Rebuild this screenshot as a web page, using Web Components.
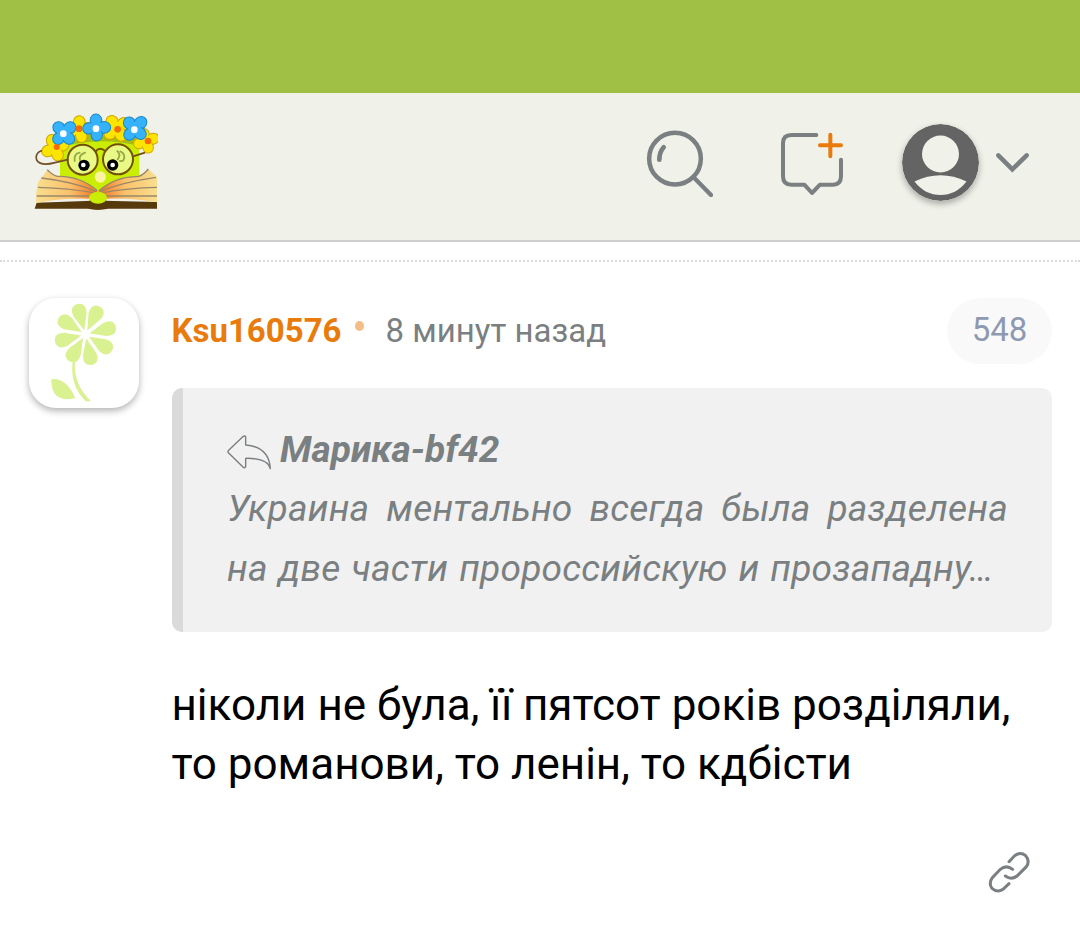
<!DOCTYPE html>
<html lang="ru">
<head>
<meta charset="UTF-8">
<meta name="viewport" content="width=device-width, initial-scale=1">
<title>Форум</title>
<style>
  body {
    margin: 0;
    background: #fff;
    color: #000;
    font-family: Roboto, "Noto Sans", sans-serif;
  }
</style>
</head>
<body>
<site-header></site-header>
<comment-item author="Ksu160576" time="8 минут назад" number="548">
  <quote-block slot="quote" author="Марика-bf42">
    <div>Украина ментально всегда была разделена</div>
    <div>на две части пророссийскую и прозападну…</div>
  </quote-block>
  ніколи не була, її пятсот років розділяли,<br>то романови, то ленін, то кдбісти
</comment-item>

<script>
class SiteLogo extends HTMLElement {
  constructor() {
    super();
    this.attachShadow({ mode: 'open' });
  }

  connectedCallback() {
    this.shadowRoot.innerHTML = `
      <style>
      :host {
        display: block;
        width: 124px;
        height: 98px;
      }

      svg {
        display: block;
      }
      </style>

      <svg width="124" height="98" viewBox="42 37 372 294">
        <defs>
          <linearGradient id="pageLeft" x1="0" x2="1">
            <stop offset="0" stop-color="#f8df8e"/>
            <stop offset=".55" stop-color="#fbc06c"/>
            <stop offset="1" stop-color="#f5721a"/>
          </linearGradient>
          <linearGradient id="pageRight" x1="0" x2="1">
            <stop offset="0" stop-color="#f5721a"/>
            <stop offset=".45" stop-color="#fbc06c"/>
            <stop offset="1" stop-color="#f8df8e"/>
          </linearGradient>
          <g id="flower">
            <g stroke-width="3">
              <ellipse cx="-15" cy="-16" rx="19" ry="17.5" transform="rotate(45 -15 -16)"/>
              <ellipse cx="17" cy="-17" rx="20" ry="17.5" transform="rotate(-45 17 -17)"/>
              <ellipse cx="-14" cy="16" rx="19" ry="17" transform="rotate(-45 -14 16)"/>
              <ellipse cx="16" cy="14" rx="19" ry="17" transform="rotate(45 16 14)"/>
            </g>
            <circle r="20" stroke="none"/>
          </g>
        </defs>
        <path d="M120 130 Q240 92 358 132 V250 Q300 242 234 282 Q180 246 120 244Z" fill="#c9ed05"/>
        <path d="M50 306 L218 300 H252 L411 304 V324 H264 Q234 330 204 324 H44Z" fill="#573a0c"/>
        <path d="M201 320 Q232 334 266 320 L258 298 H210Z" fill="#573a0c"/>
        <path d="M82 207 Q94 222 110 226 Q180 224 233 274 L212 294 Q130 291 49 307 Q46 245 64 233Z" fill="url(#pageLeft)"/>
        <path d="M385 205 Q372 222 356 227 Q290 224 235 274 L256 294 Q330 290 411 305 V229Z" fill="url(#pageRight)"/>
        <g fill="none" stroke="#98886a" stroke-width="4">
          <path d="M82 207 Q94 222 112 227 Q180 225 232 270"/>
          <path d="M64 232 Q160 243 228 272"/>
          <path d="M54 260 Q150 263 220 276"/>
          <path d="M50 286 H212"/>
          <path d="M385 205 Q372 222 354 228 Q290 226 237 270"/>
          <path d="M408 230 Q310 244 240 272"/>
          <path d="M411 260 Q320 262 248 276"/>
          <path d="M411 286 H258"/>
        </g>
        <ellipse cx="234" cy="291" rx="27" ry="18" fill="#c9ed05"/>
        <circle cx="241" cy="229" r="17" fill="#fbf3a0"/>

        <path d="M100 118 Q240 70 366 112 L358 136 Q240 106 120 140Z" fill="#a7bd16"/>
        <g fill="#fbe500" stroke="#cfa700">
          <use href="#flower" transform="translate(104 142) rotate(25) scale(1.02)"/>
          <use href="#flower" transform="translate(180 86) rotate(38)"/>
          <use href="#flower" transform="translate(289 84) rotate(12) scale(1.06)"/>
          <use href="#flower" transform="translate(377 121) rotate(28) scale(.94)"/>
        </g>
        <g fill="#35b2fa" stroke="#1688c8">
          <use href="#flower" transform="translate(131 98) rotate(3)"/>
          <use href="#flower" transform="translate(228 81) rotate(43)"/>
          <use href="#flower" transform="translate(344 84) scale(1.02)"/>
        </g>
        <g fill="#f76a08">
          <circle cx="110" cy="139" r="9"/>
          <circle cx="177" cy="84" r="10"/>
          <circle cx="293" cy="86" r="10"/>
          <circle cx="384" cy="121" r="10"/>
        </g>
        <g fill="#fff">
          <circle cx="130" cy="99" r="10"/>
          <circle cx="228" cy="84" r="10"/>
          <circle cx="343" cy="87" r="10"/>
        </g>

        <g stroke="#735006" stroke-width="6">
          <circle cx="188" cy="177" r="45" fill="#e8f985"/>
          <circle cx="294" cy="176" r="45" fill="#e8f985"/>
          <g fill="none">
            <path d="M227 152 Q240 137 256 152"/>
            <path d="M143 177 L105 186 Q62 198 50 178 Q44 158 64 150" stroke="#755026" stroke-width="5" stroke-linecap="round"/>
            <path d="M339 167 L375 156" stroke-width="5"/>
          </g>
        </g>
        <g fill="none" stroke="#99a847" stroke-width="5.5" stroke-linecap="round">
          <path d="M179 156 Q161 159 164 181"/>
          <path d="M195 156 Q173 165 181 181"/>
          <path d="M292 151 Q304 162 293 176"/>
          <path d="M301 152 Q318 160 311 177 Q308 182 300 181"/>
        </g>
        <circle cx="192" cy="194" r="17" fill="#000"/>
        <circle cx="278" cy="193" r="17" fill="#000"/>
        <circle cx="190" cy="193" r="7" fill="#fff"/>
        <circle cx="278" cy="193" r="7" fill="#fff"/>
      </svg>
    `;
  }
}

class UiIcon extends HTMLElement {
  constructor() {
    super();
    this.attachShadow({ mode: 'open' });
  }

  connectedCallback() {
    this.shadowRoot.innerHTML = `
      <style>
      :host {
        display: block;
        flex: none;
        color: #7a7f81;
      }

      svg {
        display: block;
      }

      .user {
        border-radius: 50%;
        box-shadow: 0 3px 6px rgba(0, 0, 0, 0.3);
      }
      </style>
      ${UiIcon.shapes[this.getAttribute('name')]}
    `;
  }
}

UiIcon.shapes = {
  search: `
    <svg width="67" height="67" viewBox="48 45 201 201" fill="none" stroke="currentColor" stroke-linecap="round">
      <circle cx="135" cy="131" r="77.5" stroke-width="13.5"/>
      <path d="M190 186 L243 240" stroke-width="13"/>
      <path d="M101 97 Q88 112 88 134" stroke-width="14"/>
    </svg>`,
  message: `
    <svg width="64" height="65" viewBox="450 48 192 195" fill="none" stroke="currentColor" stroke-width="12" stroke-linecap="round" stroke-linejoin="round">
      <path d="M559 60 H484 Q459 60 459 85 V184 Q459 209 484 209 H523 L546 234 L570 209 H609 Q633 209 633 184 V134"/>
      <path d="M601 59 V124 M570 91 H633" stroke="#e97b0c"/>
    </svg>`,
  user: `
    <svg class="user" width="77" height="77" viewBox="0 0 77 77">
      <circle cx="38.5" cy="38.5" r="38.5" fill="#646464"/>
      <circle cx="38.5" cy="30" r="18.5" fill="#f0f1e9"/>
      <path d="M12.5 57.5 Q38.5 45 64.5 57.5 Q54 71 38.5 71 Q23 71 12.5 57.5Z" fill="#f0f1e9"/>
    </svg>`,
  chevron: `
    <svg width="35" height="21" viewBox="330 125 105 63" fill="none" stroke="currentColor" stroke-width="13.5" stroke-linecap="round">
      <path d="M340 135 L382 177 L425 135"/>
    </svg>`,
  reply: `
    <svg width="45" height="36" viewBox="0 0 135 108" fill="none" stroke="currentColor" stroke-width="4.2" stroke-linejoin="round">
      <path d="M49 7 Q53 4 56 8 V33 Q126 38 130 104 Q122 72 56 73 V98 Q53 104 48 99 L5 57 Q1 53 5 49Z"/>
    </svg>`,
  link: `
    <svg width="43" height="43" viewBox="54 46 129 129" fill="none" stroke="currentColor" stroke-width="9" stroke-linecap="round">
      <path d="M117 78 L133 61 Q151 47 167 60 Q181 76 169 93 L141 121 Q124 134 106 121"/>
      <path d="M128 101 Q109 86 91 101 L67 126 Q55 143 66 158 Q82 172 99 161 L117 144"/>
    </svg>`
};

class SiteHeader extends HTMLElement {
  constructor() {
    super();
    this.attachShadow({ mode: 'open' });
  }

  connectedCallback() {
    this.shadowRoot.innerHTML = `
      <style>
      :host {
        display: block;
      }

      .strip {
        height: 93px;
        background: #9fc045;
      }

      .bar {
        display: flex;
        align-items: center;
        box-sizing: border-box;
        height: 149px;
        padding: 0 50px 9px 34px;
        background: #f0f1e9;
        border-bottom: 2px solid #cccfcb;
      }

      nav {
        display: flex;
        align-items: center;
        margin-left: auto;
      }

      .search {
        margin-top: 3px;
      }

      .message {
        margin: 2px 0 0 67px;
      }

      .user {
        margin-left: 58px;
      }

      .chevron {
        margin-left: 16px;
      }
      </style>

      <div class="strip"></div>
      <div class="bar">
        <site-logo></site-logo>
        <nav>
          <ui-icon class="search" name="search"></ui-icon>
          <ui-icon class="message" name="message"></ui-icon>
          <ui-icon class="user" name="user"></ui-icon>
          <ui-icon class="chevron" name="chevron"></ui-icon>
        </nav>
      </div>
    `;
  }
}

class FlowerAvatar extends HTMLElement {
  constructor() {
    super();
    this.attachShadow({ mode: 'open' });
  }

  connectedCallback() {
    // eight petals turned around the centre
    const petals = [-15, 27, 76, 122, 168, 211, 256, 302]
      .map((angle) => `<use href="#petal" transform="translate(169 109) rotate(${angle})"/>`)
      .join('');

    this.shadowRoot.innerHTML = `
      <style>
      :host {
        display: block;
        flex: none;
        width: 110px;
        height: 110px;
        border-radius: 27px;
        background: #fff;
        box-shadow: 0 3px 7px rgba(0, 0, 0, 0.3);
      }

      svg {
        display: block;
      }
      </style>

      <svg width="110" height="110" viewBox="0 0 330 330" fill="#d9f191">
        <defs>
          <path id="petal" d="M0 -13 L-20 -60 Q-27 -92 0 -94 Q27 -92 20 -60Z"/>
        </defs>
        ${petals}
        <path d="M131 190 Q122 263 170 310 H186 Q132 258 138 190Z"/>
        <path d="M67 244 Q110 237 139 300 Q66 318 67 244Z"/>
      </svg>
    `;
  }
}

class QuoteBlock extends HTMLElement {
  constructor() {
    super();
    this.attachShadow({ mode: 'open' });
  }

  connectedCallback() {
    this.shadowRoot.innerHTML = `
      <style>
      :host {
        display: block;
        box-sizing: border-box;
        height: 244px;
        padding: 32px 44px 0 44px;
        border-left: 11px solid #dadada;
        border-radius: 10px;
        background: #f1f1f1;
        color: #7a7f81;
        font-size: 37.1px;
        font-style: italic;
        line-height: 60px;
      }

      .author {
        display: flex;
        align-items: center;
        gap: 8px;
        height: 59px;
        font-weight: bold;
      }

      ui-icon {
        margin-top: 4px;
      }

      ::slotted(div) {
        letter-spacing: 0.18px;
        word-spacing: 1.6px;
        white-space: nowrap;
      }

      ::slotted(div:first-child) {
        text-align: justify;
        text-align-last: justify;
      }
      </style>

      <div class="author"><ui-icon name="reply"></ui-icon><span>${this.getAttribute('author')}</span></div>
      <slot></slot>
    `;
  }
}

class CommentItem extends HTMLElement {
  constructor() {
    super();
    this.attachShadow({ mode: 'open' });
  }

  connectedCallback() {
    this.shadowRoot.innerHTML = `
      <style>
      :host {
        display: flex;
        gap: 33px;
        margin-top: 18px;
        padding: 36px 28px 0 29px;
        border-top: 2px dotted #dcdcdc;
      }

      .content {
        flex: 1;
        min-width: 0;
      }

      .meta {
        display: flex;
        align-items: center;
        height: 66px;
        margin-bottom: 24px;
        font-size: 33px;
        color: #7a7f81;
      }

      .author,
      .time {
        margin-top: -2px;
      }

      .author {
        margin-left: -0.5px;
        color: #e97b0c;
        font-weight: bold;
      }

      .dot {
        width: 9px;
        height: 10px;
        margin: -11px 22px 0 13px;
        border-radius: 50%;
        background: #f5bd86;
      }

      .number {
        box-sizing: border-box;
        width: 105px;
        height: 66px;
        margin-left: auto;
        border-radius: 33px;
        background: #f9f9f9;
        color: #8e99b1;
        line-height: 64px;
        text-align: center;
      }

      .text {
        margin: 44px 0 0 -0.5px;
        font-size: 44px;
        line-height: 59px;
        white-space: nowrap;
      }

      .actions {
        display: flex;
        justify-content: flex-end;
        padding: 57px 21px 0 0;
      }
      </style>

      <flower-avatar></flower-avatar>
      <div class="content">
        <div class="meta">
          <span class="author">${this.getAttribute('author')}</span>
          <span class="dot"></span>
          <span class="time">${this.getAttribute('time')}</span>
          <span class="number">${this.getAttribute('number')}</span>
        </div>
        <slot name="quote"></slot>
        <div class="text"><slot></slot></div>
        <div class="actions"><ui-icon name="link"></ui-icon></div>
      </div>
    `;
  }
}

customElements.define('site-logo', SiteLogo);
customElements.define('ui-icon', UiIcon);
customElements.define('site-header', SiteHeader);
customElements.define('flower-avatar', FlowerAvatar);
customElements.define('quote-block', QuoteBlock);
customElements.define('comment-item', CommentItem);
</script>
</body>
</html>
